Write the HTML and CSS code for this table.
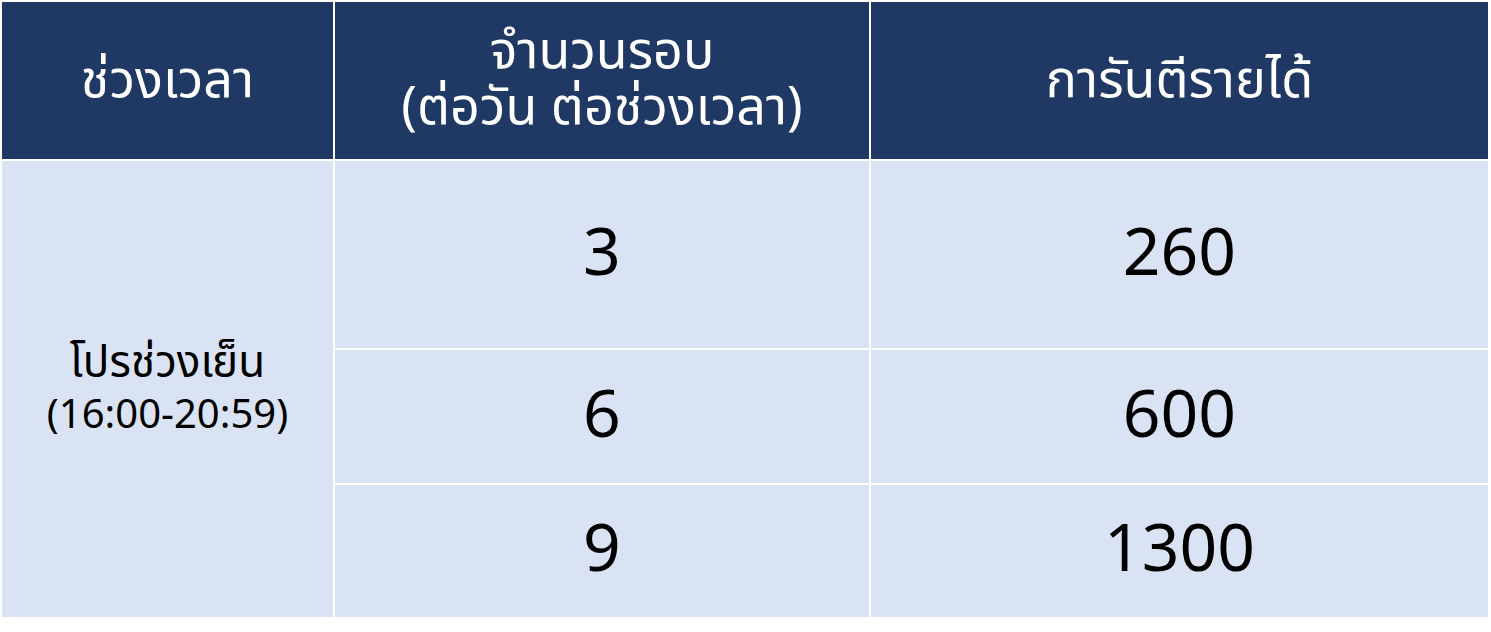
FILE: index.html
```html
<!DOCTYPE html>
<html lang="th">
<head>
<meta charset="utf-8">
<title>ตาราง</title>
<link rel="stylesheet" href="styles.css">
</head>
<body>
<div class="table">
  <div class="cell head">ช่วงเวลา</div>
  <div class="cell head two"><span class="line">จำนวนรอบ</span><span class="line">(ต่อวัน ต่อช่วงเวลา)</span></div>
  <div class="cell head">การันตีรายได้</div>
  <div class="cell body period"><span class="line thai">โปรช่วงเย็น</span><span class="line time">(16:00-20:59)</span></div>
  <div class="cell body num">3</div>
  <div class="cell body num">260</div>
  <div class="cell body num">6</div>
  <div class="cell body num">600</div>
  <div class="cell body num">9</div>
  <div class="cell body num">1300</div>
</div>
</body>
</html>
```
FILE: styles.css
```css
html, body {
  margin: 0;
  padding: 0;
  background: #ffffff;
}
body {
  padding: 2px;
  font-family: "Noto Sans Thai", "Leelawadee UI", "Noto Sans", "Open Sans", sans-serif;
}
.table {
  display: grid;
  grid-template-columns: 331px 534px 617px;
  grid-template-rows: 157px 187px 133px 132px;
  gap: 2px;
  background: #ffffff;
  width: max-content;
}
.cell {
  display: flex;
  flex-direction: column;
  align-items: center;
  justify-content: center;
  text-align: center;
}
.line {
  display: block;
}
.head {
  background: #203864;
  color: #ffffff;
  font-size: 52px;
  line-height: 56px;
}
.head.two {
  padding-bottom: 2px;
}
.body {
  background: #dae3f3;
  color: #000000;
}
.period {
  grid-row: 2 / span 3;
  padding-top: 2px;
}
.period .thai {
  font-size: 44px;
  line-height: 52px;
}
.period .time {
  font-size: 40px;
  line-height: 52px;
}
.num {
  font-size: 66px;
}
```
